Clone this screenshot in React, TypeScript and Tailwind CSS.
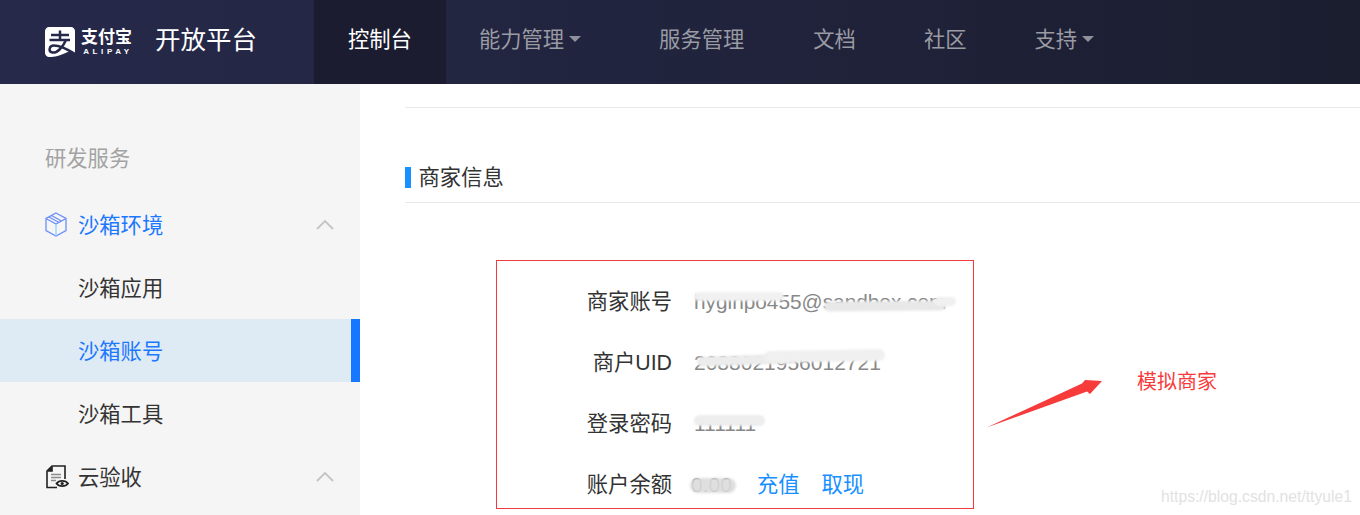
const cjk = "font-['Liberation_Sans','Noto_Sans_CJK_SC',sans-serif]";

function Caret() {
  return <span className="ml-[5px] mt-[-3px] h-0 w-0 border-x-[6px] border-t-[6px] border-x-transparent border-t-[#8f909c]" />;
}

function Chevron() {
  return (
    <svg width="18" height="11" viewBox="0 0 18 11" fill="none" stroke="#c4c4c4" strokeWidth="1.8">
      <path d="M1 10 L9 2 L17 10" />
    </svg>
  );
}

function Nav() {
  const items: [string, boolean, string][] = [
    ["能力管理", true, "ml-[-1px] pr-[43px] pl-[34px]"],
    ["服务管理", false, "ml-[1px]"],
    ["文档", false, "ml-[1px]"],
    ["社区", false, ""],
    ["支持", true, ""],
  ];
  return (
    <header className="flex h-[84px] shrink-0 bg-gradient-to-r from-[#27294b] to-[#1b1e2f] text-white">
      <div className="flex w-[314px] items-center pl-[45px]">
        <div className="h-[30px] w-[30px]">
          <svg width="30" height="30" viewBox="0 0 30 30" fill="none">
            <path d="M4 0 H26 C28 0 30 2 30 4 V27 L24 24.5 C14 29 10 30 4 30 C2 30 0 28 0 26 V4 C0 2 2 0 4 0 Z" fill="#ffffff" />
            <path d="M6 8 H24 M15 3.5 V13 M4.5 13 H25 M21 13 C18 20 12 26.5 7.5 25.5 C3 24.5 4 18.5 9 18.5 C14 18.5 22 22 30 27" stroke="#27294b" strokeWidth="2.5" />
          </svg>
        </div>
        <div className="ml-[6px] flex w-[51px] flex-col items-center">
          <span className="text-[17px] font-bold leading-[19px]">支付宝</span>
          <span className="ml-[3px] text-[8px] font-bold leading-[9px] tracking-[3.6px]">ALIPAY</span>
        </div>
        <span className="mb-[3px] ml-[23px] text-[25.5px] leading-none">开放平台</span>
      </div>
      <a className="flex h-full items-center bg-[#1b1c2f] pb-[3px] pl-[34px] pr-[34px] text-[21.3px]">控制台</a>
      {items.map(([t, c, x]) => (
        <a key={t} className={`flex h-full items-center px-[34px] pb-[3px] text-[21.3px] text-[#9a9ba3] ${x}`}>
          {t}
          {c && <Caret />}
        </a>
      ))}
    </header>
  );
}

function Sidebar() {
  return (
    <aside className="w-[360px] shrink-0 bg-[#f5f5f5] pt-[44px] text-[21.3px]">
      <div className="flex h-[65px] items-center pb-[2px] pl-[45px] text-[#a3a3a3]">研发服务</div>
      <div className="flex h-[63px] items-center pl-[45px] pr-[26px] text-[#1b78ff]">
        <svg width="22" height="25" viewBox="0 0 22 25" fill="none" stroke="#6b8ff7" strokeWidth="1.3">
          <path d="M11 1 L21 6.5 V18.5 L11 24 L1 18.5 V6.5 Z" />
          <path d="M1 6.5 L11 12 L21 6.5 M6.5 3.5 L16.5 9 M4 5 L14 10.5" />
          <path d="M11 12 V24" stroke="#8fd0ff" />
        </svg>
        <span className="ml-[11px] flex-1 pt-[4px]">沙箱环境</span>
        <Chevron />
      </div>
      <div className="flex h-[63px] items-center pl-[78px] pt-[4px] text-[#333333]">沙箱应用</div>
      <div className="flex h-[63px] items-center border-r-[9px] border-[#1677ff] bg-[#deeaf4] pl-[78px] pt-[4px] text-[#1b78ff]">沙箱账号</div>
      <div className="flex h-[63px] items-center pl-[78px] pt-[4px] text-[#333333]">沙箱工具</div>
      <div className="flex h-[63px] items-center pl-[46px] pr-[26px] text-[#333333]">
        <svg width="23" height="24" viewBox="0 0 23 24" fill="none" stroke="#222222" strokeWidth="1.6">
          <path d="M11 22.5 H1 V6 L6 1 H19 V14" />
          <path d="M6 1.5 V6 H1.5" fill="#222222" />
          <path d="M5 9.5 H15 M5 12.5 H15 M5 15.5 H10" stroke="#8a8a8a" />
          <path d="M10.5 18.5 C13 15 19.5 15 22 18.5 C19.5 22 13 22 10.5 18.5 Z" fill="#f5f5f5" strokeWidth="1.8" />
          <circle cx="16.2" cy="18.5" r="1.6" fill="#222222" stroke="none" />
        </svg>
        <span className="ml-[9px] flex-1 pt-[4px]">云验收</span>
        <Chevron />
      </div>
    </aside>
  );
}

function Row({ label, children }: { label: string; children: React.ReactNode }) {
  return (
    <div className="flex h-[61px] items-center">
      <span className="w-[175px] pt-[2px] text-right text-[21.3px] text-[#333333]">{label}</span>
      <div className="relative ml-[22px] flex items-center whitespace-nowrap text-[#888888]">{children}</div>
    </div>
  );
}

function Smear({ className }: { className: string }) {
  return <span className={`absolute rounded-full blur-[1px] ${className}`} />;
}

function Main() {
  return (
    <main className="relative flex-1 overflow-hidden pl-[45px] text-[21px]">
      <div className="mt-[23px] border-t border-[#e8e8e8]" />
      <div className="mt-[58px] flex h-[37px] items-center border-b border-[#e8e8e8]">
        <span className="mb-[13px] h-[21px] w-[6px] bg-[#1890ff]" />
        <span className="mb-[11px] ml-[7.5px] text-[21.3px] text-[#333333]">商家信息</span>
      </div>
      <section className="ml-[91px] mt-[57px] h-[249px] w-[478px] border border-[#f03c3c] pt-[10px]">
        <Row label="商家账号">
          <span className="text-[20.8px]">hyginpo455@sandbox.com</span>
          <Smear className="left-[0px] top-[6px] h-[9px] w-[90px] bg-[#f1f1f1]" />
          <Smear className="left-[130px] top-[15px] h-[10px] w-[122px] rotate-[-0.5deg] bg-[#e8e8e8]" />
          <Smear className="left-[240px] top-[11px] h-[9px] w-[22px] bg-[#f0f0f0]" />
        </Row>
        <Row label="商户UID">
          <span>2088021956012721</span>
          <Smear className="left-[3px] top-[8px] h-[10px] w-[100px] rotate-[-2deg] bg-[#ececec]" />
          <Smear className="left-[70px] top-[3px] h-[12px] w-[121px] rotate-[-1deg] bg-[#f0f0f0]" />
        </Row>
        <Row label="登录密码">
          <span>111111</span>
          <Smear className="left-[0px] top-[7px] h-[11px] w-[71px] bg-[#ededed]" />
        </Row>
        <Row label="账户余额">
          <span className="ml-[-3px]">0.00</span>
          <Smear className="left-[-4px] top-[10px] h-[15px] w-[46px] bg-[#dcdcdc]/90" />
          <a className="ml-[25px] pt-[2px] text-[21.3px] text-[#1890ff]">充值</a>
          <a className="ml-[22px] pt-[2px] text-[21.3px] text-[#1890ff]">取现</a>
        </Row>
      </section>
      <svg className="absolute left-[626px] top-[296px]" width="118" height="50" viewBox="986 380 118 50">
        <polygon points="986.7,427.5 1082,383.5 1085,380 1102,381 1090,394 1087,391.5" fill="#f73b3b" />
      </svg>
      <span className="absolute left-[777px] top-[288px] text-[20px] leading-[20px] text-[#f73b3b]">模拟商家</span>
      <span className="absolute left-[801px] top-[403px] text-[15.7px] leading-[20px] text-[#e2e2e2]">https://blog.csdn.net/ttyule1</span>
    </main>
  );
}

export default function App() {
  return (
    <div className={`flex h-[515px] w-[1360px] flex-col overflow-hidden bg-white ${cjk}`}>
      <Nav />
      <div className="flex min-h-0 flex-1">
        <Sidebar />
        <Main />
      </div>
    </div>
  );
}
